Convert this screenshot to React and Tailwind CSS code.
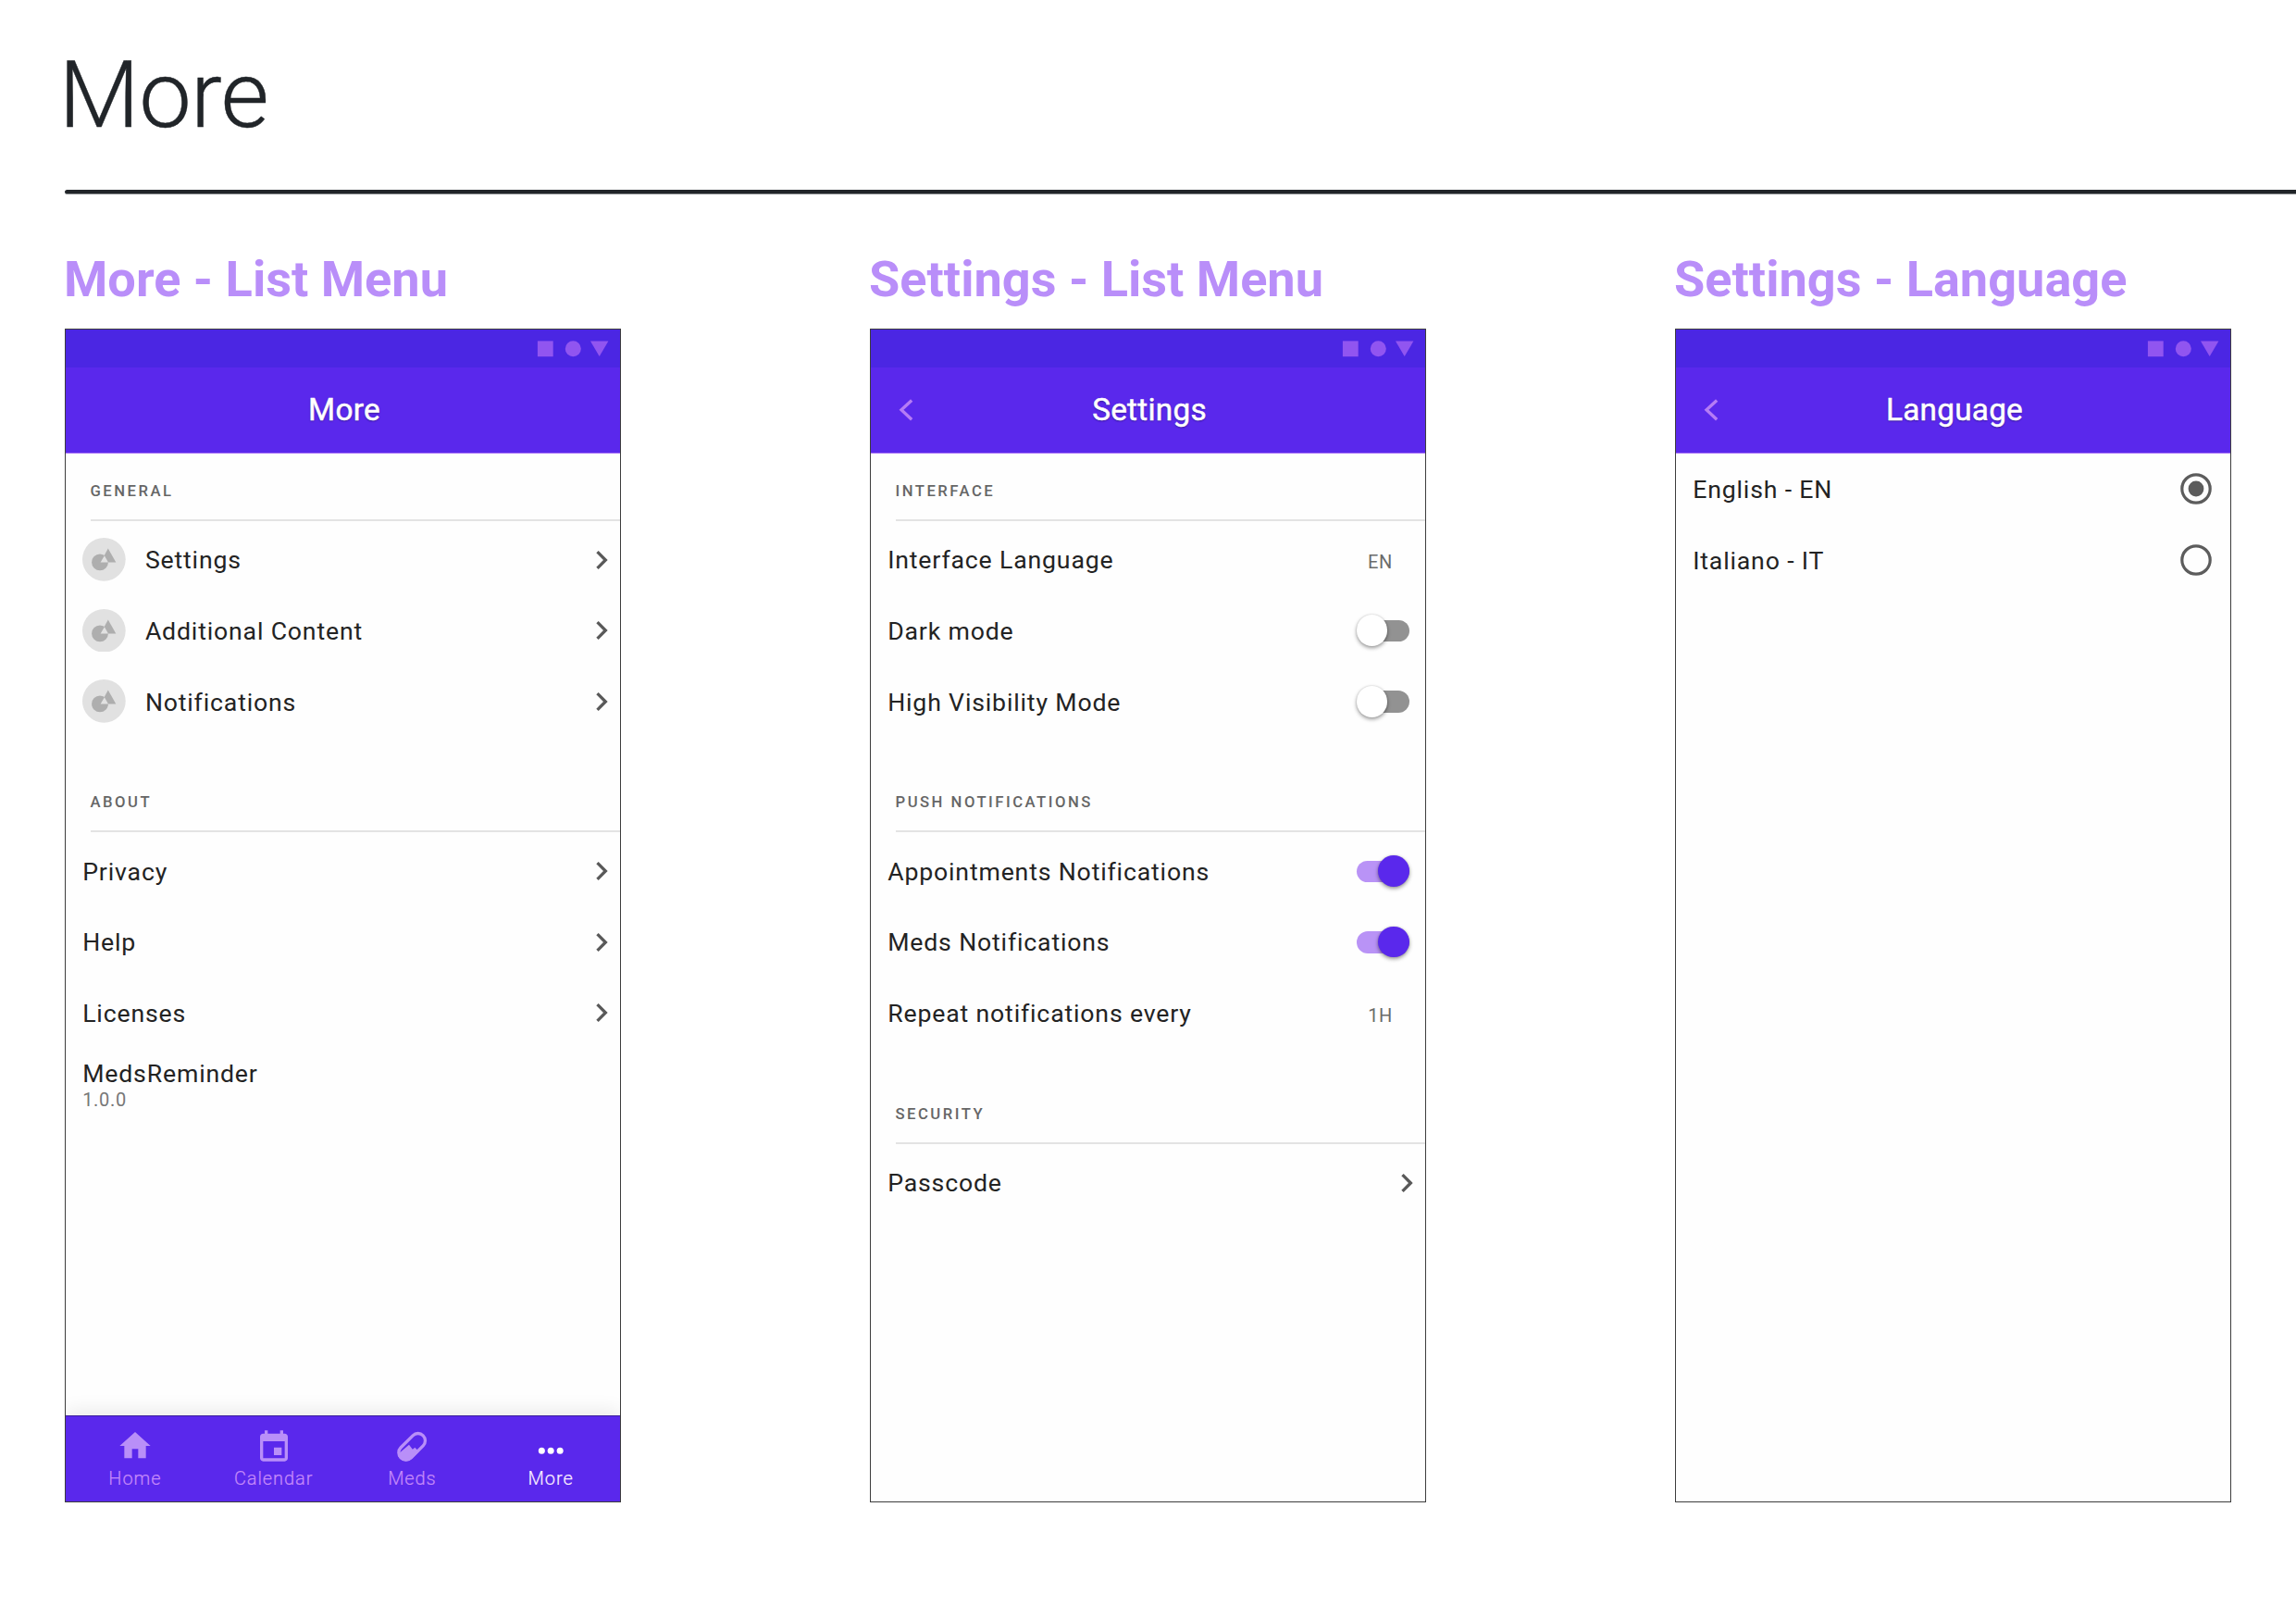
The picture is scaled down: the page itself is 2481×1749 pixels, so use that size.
import React from "react";

function StatusIcons() {
  return (
    <svg className="block h-[18px] w-[78px]" viewBox="0 0 78 18" fill="#9155f0">
      <rect x="0.9" y="0.4" width="16.8" height="16.8" />
      <circle cx="39.3" cy="8.8" r="8.5" />
      <path d="M58 0.6h19.4l-9.7 16.4z" />
    </svg>
  );
}

function ChevronRight() {
  return (
    <svg className="relative top-[0.4px] block size-10" viewBox="0 0 24 24" fill="#595959">
      <path d="M8.59 16.59L13.17 12 8.59 7.41 10 6l6 6-6 6z" />
    </svg>
  );
}

function Avatar() {
  return (
    <svg className="mr-[21px] block size-[46.7px]" viewBox="0 0 46.7 46.7">
      <circle cx="23.35" cy="23.35" r="23.35" fill="#e1e1e1" />
      <circle cx="19" cy="26.4" r="8.9" fill="#aeaeae" />
      <path d="M27.8 11.6l8.5 14.8H19.6z" fill="#aeaeae" />
      <path d="M23.9 19.2l4.1 7.2h-8.4z" fill="#e1e1e1" />
    </svg>
  );
}

function Switch({ on }) {
  return (
    <div className="relative top-[0.5px] mr-[17.5px] h-[34px] w-[57px]">
      {on ? (
        <>
          <div className="absolute top-[5.3px] left-0 h-[23.3px] w-full rounded-full bg-[#b993f6]" />
          <div className="absolute top-0 right-0 size-[33.4px] rounded-full bg-[#5a28ec] shadow-[0_2px_4px_rgba(0,0,0,0.4),0_0_2px_rgba(0,0,0,0.15)]" />
        </>
      ) : (
        <>
          <div className="absolute top-[5.3px] right-0 h-[23.3px] w-[53px] rounded-full bg-[#929292]" />
          <div className="absolute top-0 left-0 size-[33.4px] rounded-full bg-white shadow-[0_2px_4px_rgba(0,0,0,0.4),0_0_2px_rgba(0,0,0,0.15)]" />
        </>
      )}
    </div>
  );
}

function Radio({ on }) {
  return (
    <svg className="mr-[20.4px] block size-[34px]" viewBox="0 0 34 34">
      <circle cx="17" cy="17" r="15.2" fill="none" stroke="#5c5c5c" strokeWidth="3.2" />
      {on && <circle cx="17" cy="17" r="8.4" fill="#5c5c5c" />}
    </svg>
  );
}

function Row({ label, avatar, children }) {
  return (
    <div className="flex h-[76.67px] items-center pl-[18.2px]">
      {avatar && <Avatar />}
      <span className="flex-1 pt-[2px] text-[26.67px] leading-8 tracking-[0.83px] text-[#232323]">{label}</span>
      {children}
    </div>
  );
}

function Value({ children }) {
  return <span className="mr-[35px] pt-[5px] text-[20px] leading-6 tracking-[0.67px] text-[#6b6b6b]">{children}</span>;
}

function Section({ title, children }) {
  return (
    <section className="mb-[30.5px]">
      <div className="mb-[3.3px] ml-[26.5px] h-[72.7px] border-b-2 border-[#e3e3e3] pt-[31px] text-[16.67px] leading-5 font-medium tracking-[2.5px] text-[#666666]">
        {title}
      </div>
      {children}
    </section>
  );
}

function Phone({ heading, title, back, nav, children }) {
  return (
    <div className="w-[601px]">
      <h2 className="-ml-px h-[85px] text-[54.1px] leading-[64px] font-bold whitespace-nowrap text-[#b98ef9]">{heading}</h2>
      <div className="relative flex h-[1268px] flex-col overflow-hidden border border-[#3c3c3c] bg-[#fefefe]">
        <div className="flex h-[41px] shrink-0 items-center justify-end bg-[#4b26e3] pr-[12.4px]">
          <StatusIcons />
        </div>
        <div className="relative flex h-[93px] shrink-0 items-center justify-center border-b border-[#a873f6] bg-[#5a28ec] pl-[3px]">
          {back && (
            <svg className="absolute top-[26px] left-[18px] size-10" viewBox="0 0 24 24" fill="none" stroke="#b57cf5" strokeWidth="2">
              <path d="M15.7 5.7L9 11.9l6.7 6.3" />
            </svg>
          )}
          <span className="text-[33.33px] leading-10 tracking-[0.25px] text-white [-webkit-text-stroke:0.5px_#fff] [text-shadow:0_1px_2px_rgba(0,0,0,0.4)]">
            {title}
          </span>
        </div>
        <div className="flex-1">{children}</div>
        {nav}
      </div>
    </div>
  );
}

function NavItem({ label, active, children }) {
  return (
    <div className={"flex flex-1 flex-col items-center pt-3 " + (active ? "text-white" : "text-[#b98ff8]")}>
      <svg className="block size-10" viewBox="0 0 24 24" fill="currentColor">
        {children}
      </svg>
      <span
        className={
          "mt-[3px] text-[20px] leading-6 font-light tracking-[0.9px] " +
          (active ? "text-[#fbeeff] [-webkit-text-stroke:0.2px_#fbeeff]" : "text-[#c58afa] [-webkit-text-stroke:0.2px_#c58afa]")
        }
      >
        {label}
      </span>
    </div>
  );
}

function BottomNav() {
  return (
    <nav className="flex h-[93px] shrink-0 border-t border-[#3a1f9a] bg-[#5a28ec] shadow-[0_-4px_20px_rgba(0,0,0,0.09)]">
      <NavItem label="Home">
        <path d="M10 20v-6h4v6h5v-8h3L12 3 2 12h3v8z" />
      </NavItem>
      <NavItem label="Calendar">
        <path
          transform="translate(0 1)"
          d="M17 12h-5v5h5v-5zM16 1v2H8V1H6v2H5c-1.11 0-1.99.9-1.99 2L3 19c0 1.1.89 2 2 2h14c1.1 0 2-.9 2-2V5c0-1.1-.9-2-2-2h-1V1h-2zm3 18H5V8h14v11z"
        />
      </NavItem>
      <NavItem label="Meds">
        <clipPath id="capsule">
          <rect x="6.6" y="1.5" width="11" height="22" rx="5.5" transform="rotate(45 12.1 12.5)" />
        </clipPath>
        <rect
          x="7.4"
          y="2.3"
          width="9.4"
          height="20.4"
          rx="4.7"
          fill="none"
          stroke="currentColor"
          strokeWidth="2"
          transform="rotate(45 12.1 12.5)"
        />
        <path d="M3 17.4l7.2-6.1 2.3 2.9 1.5-1.2 3 3L10 24H3z" clipPath="url(#capsule)" />
      </NavItem>
      <NavItem label="More" active>
        <circle cx="6.2" cy="15.1" r="2.1" />
        <circle cx="12.1" cy="15.1" r="2.1" />
        <circle cx="18.1" cy="15.1" r="2.1" />
      </NavItem>
    </nav>
  );
}

export default function App() {
  return (
    <main className="h-[1749px] w-[2481px] overflow-hidden bg-white pl-[70px] font-['Roboto',sans-serif]">
      <h1 className="-ml-[6.5px] h-[205px] pt-[43px] text-[101px] leading-[120px] font-light tracking-[-0.7px] text-[#212529] [-webkit-text-stroke:0.4px_#212529]">
        More
      </h1>
      <div className="h-[5px] rounded-l-full border-b border-[#7d8083] bg-[#212529]" />
      <div className="mt-[60px] flex gap-[269px]">
        <Phone heading="More - List Menu" title="More" nav={<BottomNav />}>
          <Section title="GENERAL">
            {["Settings", "Additional Content", "Notifications"].map((t) => (
              <Row key={t} label={t} avatar>
                <ChevronRight />
              </Row>
            ))}
          </Section>
          <Section title="ABOUT">
            {["Privacy", "Help", "Licenses"].map((t) => (
              <Row key={t} label={t}>
                <ChevronRight />
              </Row>
            ))}
            <div className="pt-[12px] pl-[18.2px]">
              <div className="text-[26.67px] leading-8 tracking-[0.83px] text-[#232323]">MedsReminder</div>
              <div className="text-[20px] leading-6 tracking-[0.67px] text-[#777777]">1.0.0</div>
            </div>
          </Section>
        </Phone>
        <Phone heading="Settings - List Menu" title="Settings" back>
          <Section title="INTERFACE">
            <Row label="Interface Language">
              <Value>EN</Value>
            </Row>
            <Row label="Dark mode">
              <Switch />
            </Row>
            <Row label="High Visibility Mode">
              <Switch />
            </Row>
          </Section>
          <Section title="PUSH NOTIFICATIONS">
            <Row label="Appointments Notifications">
              <Switch on />
            </Row>
            <Row label="Meds Notifications">
              <Switch on />
            </Row>
            <Row label="Repeat notifications every">
              <Value>1H</Value>
            </Row>
          </Section>
          <Section title="SECURITY">
            <Row label="Passcode">
              <ChevronRight />
            </Row>
          </Section>
        </Phone>
        <Phone heading="Settings - Language" title="Language" back>
          <Row label="English - EN">
            <Radio on />
          </Row>
          <Row label="Italiano - IT">
            <Radio />
          </Row>
        </Phone>
      </div>
    </main>
  );
}
